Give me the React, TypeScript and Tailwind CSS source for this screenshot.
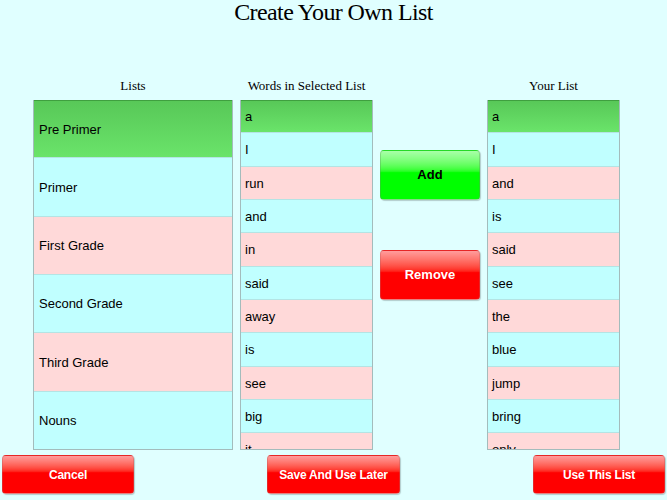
import React from "react";

const lists = ["Pre Primer", "Primer", "First Grade", "Second Grade", "Third Grade", "Nouns"];
const words = ["a", "I", "run", "and", "in", "said", "away", "is", "see", "big", "it"];
const yours = ["a", "I", "and", "is", "said", "see", "the", "blue", "jump", "bring", "only"];

function rowBg(i: number) {
  if (i === 0) return "bg-gradient-to-b from-[#58c858] to-[#6ae46a] border-t border-t-[#3f9f3f]";
  return i % 2 === 1 ? "bg-[#c0ffff]" : "bg-[#ffd9d9]";
}

function WordList({ items }: { items: string[] }) {
  return (
    <div className="w-[133px] h-[350px] overflow-hidden border-x border-b border-[#a3bcbc]">
      {items.map((w, i) => (
        <div
          key={i}
          className={`h-[33.333px] shrink-0 flex items-center pl-[4px] pt-[1px] text-[13px] text-black border-b border-b-[#b4e4e4] ${rowBg(i)}`}
        >
          {w}
        </div>
      ))}
    </div>
  );
}

function RedButton({ label, w }: { label: string; w: string }) {
  return (
    <div
      className={`${w} h-[39px] rounded-[4px] border border-[#c06060]/40 bg-gradient-to-b from-[#ff9c9c] via-[#ff0000] via-45% to-[#ff0000] flex items-center justify-center text-white font-bold text-[12px] tracking-[-0.2px] shadow-[1px_1px_1px_rgba(0,0,0,0.2)]`}
    >
      {label}
    </div>
  );
}

export default function App() {
  return (
    <div
      className="w-[667px] h-[500px] bg-[#e0ffff] overflow-hidden flex flex-col"
      style={{ fontFamily: '"Liberation Sans", Arial, sans-serif' }}
    >
      <div
        className="h-[24px] leading-[24px] text-[24px] tracking-[-0.6px] text-center text-black"
        style={{ fontFamily: '"Liberation Serif", "Times New Roman", serif' }}
      >
        Create Your Own List
      </div>
      <div
        className="mt-[54px] h-[16px] flex text-[13px] leading-[16px] text-black pl-[33px]"
        style={{ fontFamily: '"Liberation Serif", "Times New Roman", serif' }}
      >
        <div className="w-[200px] text-center">Lists</div>
        <div className="w-[133px] ml-[7px] text-center">Words in Selected List</div>
        <div className="w-[133px] ml-[114px] text-center">Your List</div>
      </div>
      <div className="mt-[6px] flex pl-[33px]">
        <div className="w-[200px] h-[350px] overflow-hidden border-x border-b border-[#a3bcbc]">
          {lists.map((l, i) => (
            <div
              key={i}
              className={`h-[58.333px] flex items-center pl-[5px] pt-[1px] text-[13px] text-black border-b border-b-[#b4e4e4] ${rowBg(i)}`}
            >
              {l}
            </div>
          ))}
        </div>
        <div className="ml-[7px]">
          <WordList items={words} />
        </div>
        <div className="ml-[7px] w-[100px] flex flex-col pt-[50px] gap-[50px]">
          <div className="h-[50px] rounded-[4px] border border-[#60a060]/40 bg-gradient-to-b from-[#a8ffa8] via-[#00ff00] via-45% to-[#00ff00] flex items-center justify-center text-black font-bold text-[13px] shadow-[1px_1px_1px_rgba(0,0,0,0.2)]">
            Add
          </div>
          <div className="h-[50px] rounded-[4px] border border-[#c06060]/40 bg-gradient-to-b from-[#ff9c9c] via-[#ff0000] via-45% to-[#ff0000] flex items-center justify-center text-white font-bold text-[13px] shadow-[1px_1px_1px_rgba(0,0,0,0.2)]">
            Remove
          </div>
        </div>
        <div className="ml-[7px]">
          <WordList items={yours} />
        </div>
      </div>
      <div className="mt-[5px] flex justify-between px-[2px]">
        <RedButton label="Cancel" w="w-[132px]" />
        <RedButton label="Save And Use Later" w="w-[133px]" />
        <RedButton label="Use This List" w="w-[132px]" />
      </div>
    </div>
  );
}
